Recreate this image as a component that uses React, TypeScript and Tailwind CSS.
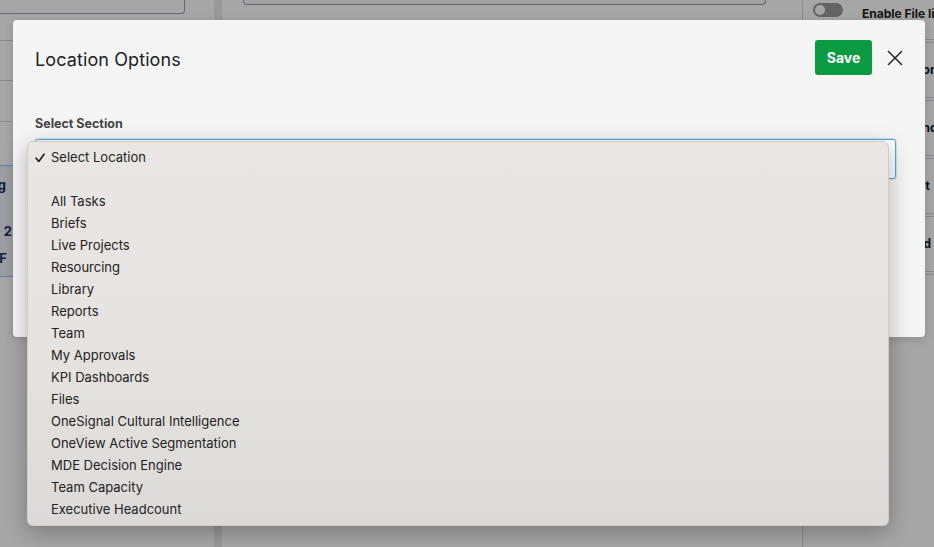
import { X } from "lucide-react";

const locations = [
  "All Tasks",
  "Briefs",
  "Live Projects",
  "Resourcing",
  "Library",
  "Reports",
  "Team",
  "My Approvals",
  "KPI Dashboards",
  "Files",
  "OneSignal Cultural Intelligence",
  "OneView Active Segmentation",
  "MDE Decision Engine",
  "Team Capacity",
  "Executive Headcount",
];

const settings = ["Enable Zoom", "Enable Vendor", "Enable Edit", "Enable Add sets"];

// the page under the modal, only slivers of it show through the overlay
function PageBehind() {
  return (
    <div className="flex h-full">
      <div className="flex w-[214px] flex-col">
        <div className="h-[14px] w-[185px] rounded-br border-b border-r border-gray-400" />
        <div className="h-[27px] border-b border-gray-300" />
        <div className="h-[40px] border-b border-gray-300" />
        <div className="h-[41px] border-b border-gray-300" />
        <div className="h-[43px]" />
        <div className="flex h-[112px] flex-col border-y border-blue-300 bg-[#eef2fb] text-[13px] leading-[16px] font-bold text-[#1e2d5a]">
          <div className="mt-[11px] flex w-[6px] justify-end overflow-hidden">
            <span className="whitespace-nowrap">Mktg</span>
          </div>
          <div className="mt-[30px] flex w-[12px] justify-end overflow-hidden">
            <span className="whitespace-nowrap">Jan 1, 2</span>
          </div>
          <div className="mt-[11px] flex w-[7px] justify-end overflow-hidden">
            <span className="whitespace-nowrap">PDF</span>
          </div>
        </div>
      </div>
      <div className="w-2 bg-[#ececec]" />
      <div className="flex-1 px-[21px]">
        <div className="h-[5px] w-[523px] rounded-b border-x border-b border-gray-400 bg-[#fafafa]" />
      </div>
      <div className="w-[132px] border-l border-gray-300">
        <div className="flex h-[43px] items-start gap-[19px] border-b-[4px] border-double border-gray-300 pl-[10px] pt-[3px]">
          <div className="flex h-[14px] w-[30px] shrink-0 items-center rounded-full bg-[#9a9a9a] px-[2px]">
            <div className="h-[10px] w-[10px] rounded-full bg-white" />
          </div>
          <span className="mt-[2px] whitespace-nowrap text-[12px] font-bold text-[#222]">
            Enable File linking
          </span>
        </div>
        {settings.map((s) => (
          <div
            key={s}
            className="flex h-[58px] items-center border-b-[4px] border-double border-gray-300 pl-[59px]"
          >
            <span className="whitespace-nowrap text-[12.5px] font-bold text-[#222]">{s}</span>
          </div>
        ))}
      </div>
    </div>
  );
}

export default function App() {
  return (
    <div className="relative h-[547px] w-full overflow-hidden bg-white font-['Inter','Noto_Sans',sans-serif]">
      <PageBehind />
      <div className="absolute inset-0 bg-black/35" />

      <div className="absolute left-[13px] top-[20px] h-[317px] w-[912px] rounded bg-[#f5f5f5] shadow-[0_2px_10px_rgba(0,0,0,0.15)]">
        <div className="flex items-center justify-between pl-[22px] pr-[17px] pt-[20px]">
          <h2 className="mt-[3px] text-[18px] font-normal tracking-[0.1px] text-[#222]">Location Options</h2>
          <div className="flex items-center gap-[10px]">
            <button
              type="button"
              className="h-[35px] w-[57px] rounded-[3px] bg-[#0a9a42] text-[14px] font-bold text-white"
            >
              Save
            </button>
            <X className="h-[26px] w-[26px] text-[#2a2a2a]" strokeWidth={1.5} />
          </div>
        </div>

        <div className="px-[22px] pt-[40px]">
          <label className="block text-[12.5px] font-bold text-[#444]">Select Section</label>
          <div className="mt-[5px] h-[40px] w-[861px] rounded-[3px] border border-[#5da4d9] bg-white shadow-[0_0_0_1px_rgba(93,164,217,0.25)]" />
        </div>
      </div>

      <div className="absolute left-[27px] top-[141px] w-[862px] rounded-md border border-[#cfcccb] bg-gradient-to-b from-[#e9e6e3] via-[#e6e3e0] to-[#dcdad8] pb-[4px] pt-[5px] text-[13px] text-[#222] shadow-[0_6px_22px_rgba(0,0,0,0.28)]">
        <div className="flex h-[22px] items-center">
          <span className="flex w-[23px] justify-center pl-[1px]">
            <svg width="10" height="10" viewBox="0 0 10 10" fill="none">
              <path d="M1 5.2 L3.8 8.4 L9 1.2" stroke="#222" strokeWidth="1.7" strokeLinecap="round" strokeLinejoin="round" />
            </svg>
          </span>
          <span>Select Location</span>
        </div>
        <div className="h-[22px]" />
        {locations.map((name) => (
          <div key={name} className="flex h-[22px] items-center pl-[23px]">
            {name}
          </div>
        ))}
      </div>
    </div>
  );
}
